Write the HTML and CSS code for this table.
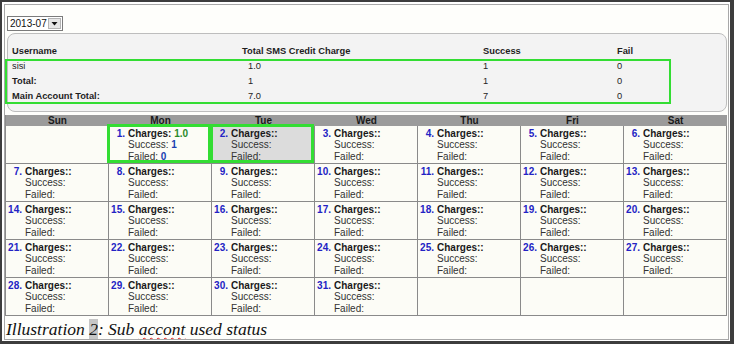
FILE: index.html
```html
<!DOCTYPE html>
<html>
<head>
<meta charset="utf-8">
<link rel="stylesheet" href="styles.css">
</head>
<body>
<div class="page">
  <div class="sheet">
    <div class="toolbar">
      <div class="select">
        <span class="select-text">2013-07</span>
        <span class="select-btn"><svg width="7" height="5" viewBox="0 0 7 5"><path d="M0.5 1h6L3.5 4.5z" fill="#111"/></svg></span>
      </div>
    </div>
    <div class="summary">
      <div class="sum-row sum-head"><span>Username</span><span>Total SMS Credit Charge</span><span>Success</span><span>Fail</span></div>
      <div class="sum-body">
        <div class="sum-row"><span>sisi</span><span class="c2">1.0</span><span>1</span><span>0</span></div>
        <div class="sum-row"><span class="b">Total:</span><span class="c2">1</span><span>1</span><span>0</span></div>
        <div class="sum-row"><span class="b">Main Account Total:</span><span class="c2">7.0</span><span>7</span><span>0</span></div>
        <div class="annot-sum"></div>
      </div>
    </div>
    <div class="calendar">
      <div class="dow">Sun</div><div class="dow">Mon</div><div class="dow">Tue</div><div class="dow">Wed</div><div class="dow">Thu</div><div class="dow">Fri</div><div class="dow">Sat</div>

      <div class="day"></div>
      <div class="day mark"><span class="dn">1.</span><div><div class="ch">Charges: <span class="g">1.0</span></div><div>Success: <span class="bl">1</span></div><div>Failed: <span class="bl">0</span></div></div></div>
      <div class="day mark today"><span class="dn">2.</span><div><div class="ch">Charges::</div><div>Success:</div><div>Failed:</div></div></div>
      <div class="day"><span class="dn">3.</span><div><div class="ch">Charges::</div><div>Success:</div><div>Failed:</div></div></div>
      <div class="day"><span class="dn">4.</span><div><div class="ch">Charges::</div><div>Success:</div><div>Failed:</div></div></div>
      <div class="day"><span class="dn">5.</span><div><div class="ch">Charges::</div><div>Success:</div><div>Failed:</div></div></div>
      <div class="day"><span class="dn">6.</span><div><div class="ch">Charges::</div><div>Success:</div><div>Failed:</div></div></div>

      <div class="day"><span class="dn">7.</span><div><div class="ch">Charges::</div><div>Success:</div><div>Failed:</div></div></div>
      <div class="day"><span class="dn">8.</span><div><div class="ch">Charges::</div><div>Success:</div><div>Failed:</div></div></div>
      <div class="day"><span class="dn">9.</span><div><div class="ch">Charges::</div><div>Success:</div><div>Failed:</div></div></div>
      <div class="day"><span class="dn">10.</span><div><div class="ch">Charges::</div><div>Success:</div><div>Failed:</div></div></div>
      <div class="day"><span class="dn">11.</span><div><div class="ch">Charges::</div><div>Success:</div><div>Failed:</div></div></div>
      <div class="day"><span class="dn">12.</span><div><div class="ch">Charges::</div><div>Success:</div><div>Failed:</div></div></div>
      <div class="day"><span class="dn">13.</span><div><div class="ch">Charges::</div><div>Success:</div><div>Failed:</div></div></div>

      <div class="day"><span class="dn">14.</span><div><div class="ch">Charges::</div><div>Success:</div><div>Failed:</div></div></div>
      <div class="day"><span class="dn">15.</span><div><div class="ch">Charges::</div><div>Success:</div><div>Failed:</div></div></div>
      <div class="day"><span class="dn">16.</span><div><div class="ch">Charges::</div><div>Success:</div><div>Failed:</div></div></div>
      <div class="day"><span class="dn">17.</span><div><div class="ch">Charges::</div><div>Success:</div><div>Failed:</div></div></div>
      <div class="day"><span class="dn">18.</span><div><div class="ch">Charges::</div><div>Success:</div><div>Failed:</div></div></div>
      <div class="day"><span class="dn">19.</span><div><div class="ch">Charges::</div><div>Success:</div><div>Failed:</div></div></div>
      <div class="day"><span class="dn">20.</span><div><div class="ch">Charges::</div><div>Success:</div><div>Failed:</div></div></div>

      <div class="day"><span class="dn">21.</span><div><div class="ch">Charges::</div><div>Success:</div><div>Failed:</div></div></div>
      <div class="day"><span class="dn">22.</span><div><div class="ch">Charges::</div><div>Success:</div><div>Failed:</div></div></div>
      <div class="day"><span class="dn">23.</span><div><div class="ch">Charges::</div><div>Success:</div><div>Failed:</div></div></div>
      <div class="day"><span class="dn">24.</span><div><div class="ch">Charges::</div><div>Success:</div><div>Failed:</div></div></div>
      <div class="day"><span class="dn">25.</span><div><div class="ch">Charges::</div><div>Success:</div><div>Failed:</div></div></div>
      <div class="day"><span class="dn">26.</span><div><div class="ch">Charges::</div><div>Success:</div><div>Failed:</div></div></div>
      <div class="day"><span class="dn">27.</span><div><div class="ch">Charges::</div><div>Success:</div><div>Failed:</div></div></div>

      <div class="day"><span class="dn">28.</span><div><div class="ch">Charges::</div><div>Success:</div><div>Failed:</div></div></div>
      <div class="day"><span class="dn">29.</span><div><div class="ch">Charges::</div><div>Success:</div><div>Failed:</div></div></div>
      <div class="day"><span class="dn">30.</span><div><div class="ch">Charges::</div><div>Success:</div><div>Failed:</div></div></div>
      <div class="day"><span class="dn">31.</span><div><div class="ch">Charges::</div><div>Success:</div><div>Failed:</div></div></div>
      <div class="day"></div>
      <div class="day"></div>
      <div class="day"></div>
    </div>
    <p class="caption">Illustration <span class="field">2</span>: Sub <span class="typo">accont</span> used status</p>
  </div>
</div>
</body>
</html>
```

FILE: styles.css
```css
* { box-sizing: border-box; }
html, body { margin: 0; padding: 0; }
body {
  background: #3d3d3d;
  width: 734px;
  height: 344px;
  overflow: hidden;
  font-family: "Liberation Sans", Arial, sans-serif;
}
.page {
  margin: 2px 4px 0 2px;
  height: 339px;
  background: #ffffff;
  padding: 2px 1px 1px 2px;
}
.sheet {
  height: 336px;
  border: 1px solid #a8a8a8;
  background: #fefefb;
  overflow: hidden;
}
.toolbar {
  padding: 11px 0 0 2px;
}
.select {
  display: flex;
  width: 56px;
  height: 15px;
  border: 1px solid #7b7b7b;
  background: #fff;
}
.select-text {
  flex: 1;
  font-size: 10px;
  line-height: 13px;
  padding-left: 2px;
  color: #111;
}
.select-btn {
  width: 13px;
  margin: 1px;
  background: #e6e6e6;
  border: 1px solid #b4b4b4;
  display: flex;
  align-items: center;
  justify-content: center;
}
.summary {
  margin: 2px 1px 0 2px;
  border: 1px solid #bdbdbd;
  border-radius: 8px;
  background: #f3f3f3;
  padding: 10px 4px 7px 4px;
  font-size: 9.3px;
  color: #1e1e1e;
}
.sum-row {
  display: grid;
  grid-template-columns: 230px 241px 134px 1fr;
  height: 15px;
  line-height: 15px;
}
.sum-head { font-weight: bold; }
.sum-body { position: relative; }
.sum-body .c2 { padding-left: 6px; }
.b { font-weight: bold; }
.annot-sum {
  position: absolute;
  top: 0;
  bottom: 0;
  left: -7px;
  width: 666px;
  border: 2px solid #33dd33;
}
.calendar {
  margin-top: 3px;
  display: grid;
  grid-template-columns: repeat(7, 103px);
  width: 722px;
  border-left: 1px solid #8a8a8a;
}
.dow {
  background: #9b9b9b;
  height: 11px;
  font-size: 10px;
  font-weight: bold;
  line-height: 11px;
  text-align: center;
  color: #1a1a1a;
}
.day {
  height: 38px;
  border-right: 1px solid #8a8a8a;
  border-bottom: 1px solid #8a8a8a;
  background: #fcfcf6;
  display: grid;
  grid-template-columns: 16px 1fr;
  column-gap: 3px;
  align-content: start;
  padding-top: 1.5px;
  font-size: 10px;
  line-height: 11.5px;
  color: #333;
}
.dn {
  text-align: right;
  color: #2323c4;
  font-weight: bold;
}
.ch { font-weight: bold; color: #1a1a1a; }
.g { color: #2a8a2a; font-weight: bold; }
.bl { color: #1a3fb0; font-weight: bold; }
.today { background: #dcdcdc; }
.mark { position: relative; }
.mark::after {
  content: "";
  position: absolute;
  top: -2px;
  left: -2px;
  right: 0;
  bottom: 0;
  border: 3px solid #33dd33;
  z-index: 1;
}
.caption {
  margin: 3px 0 0 1px;
  font-family: "Liberation Serif", "Times New Roman", serif;
  font-style: italic;
  font-size: 17.5px;
  line-height: 20px;
  color: #111;
}
.field { background: #c6c6c6; }
.typo {
  text-decoration: underline wavy #e02020;
  text-decoration-thickness: 1px;
  text-underline-offset: 2px;
}
```
